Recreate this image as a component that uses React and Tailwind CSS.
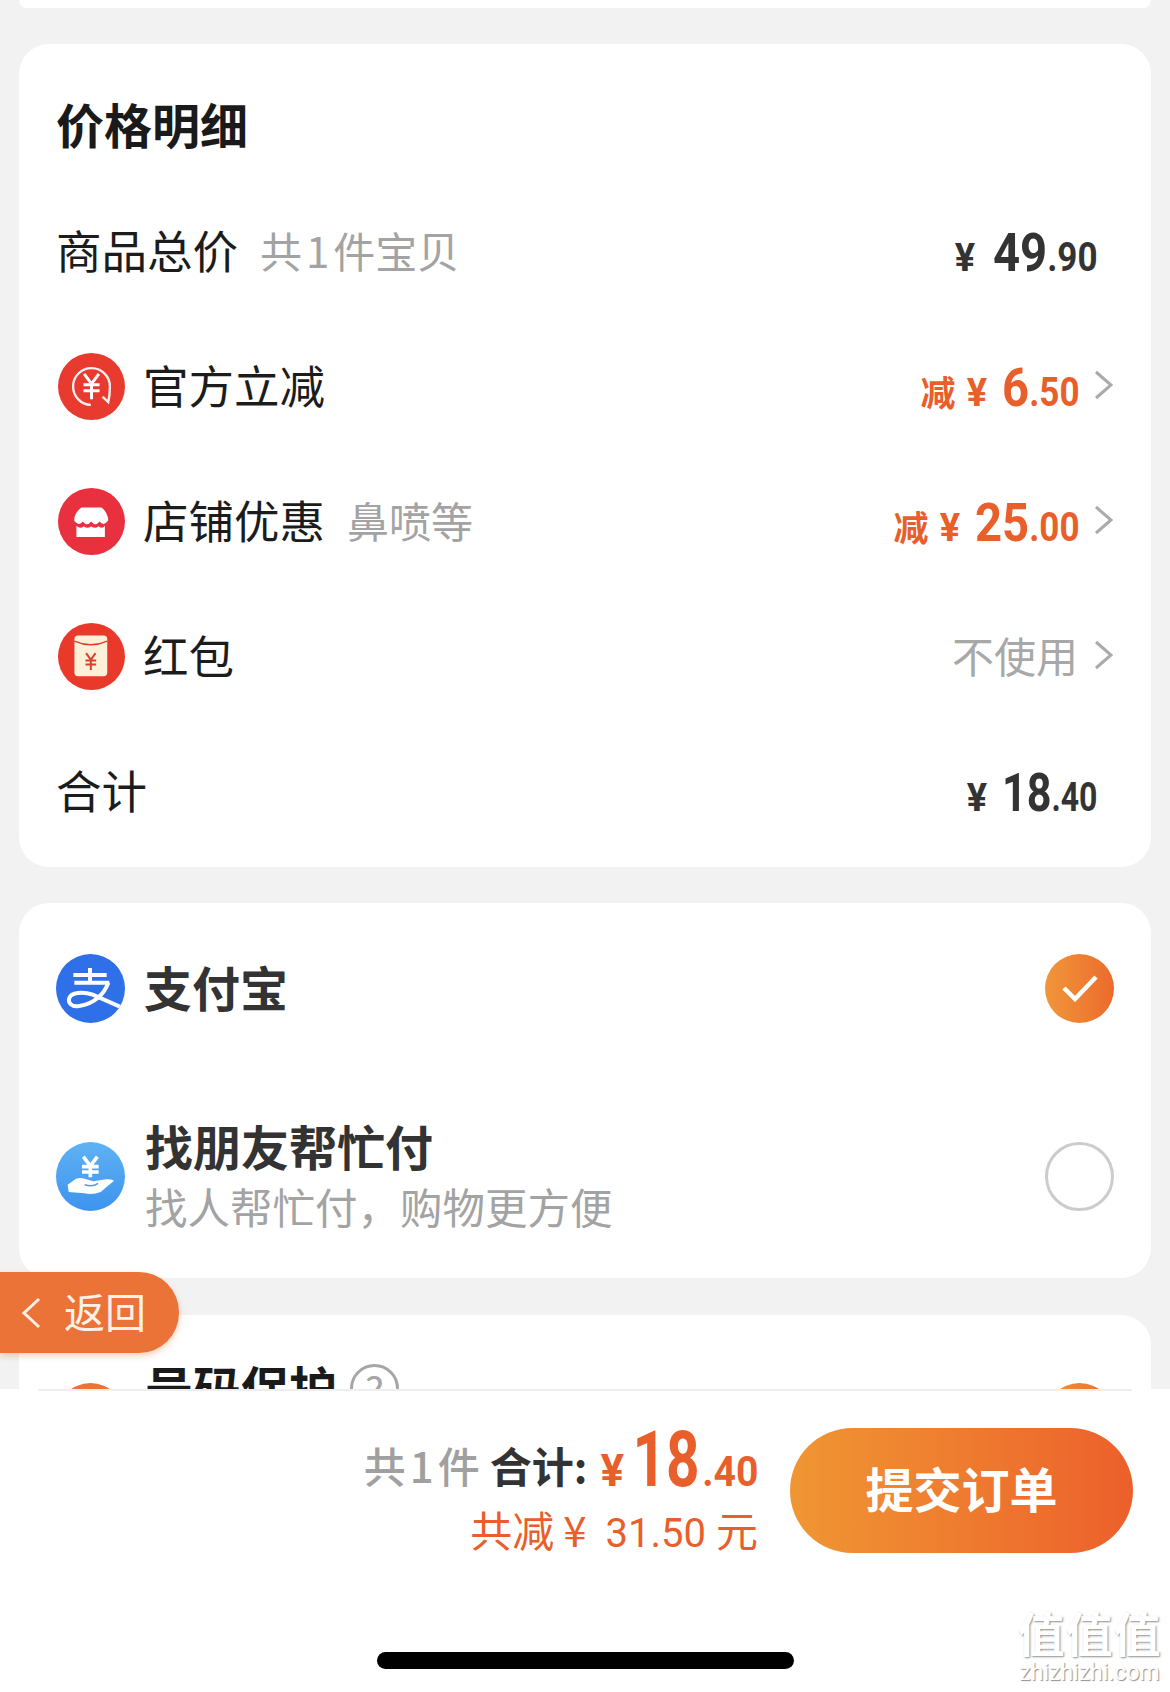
import React from "react";

const Chevron = () => (
  <svg width="19" height="30" viewBox="0 0 19 30" fill="none" className="shrink-0 mb-[4px]">
    <path d="M2 2 L17 15 L2 28" stroke="#aaaaaa" strokeWidth="3" />
  </svg>
);

const IconOfficial = () => (
  <svg width="67" height="67" viewBox="0 0 200 200" className="shrink-0">
    <circle cx="100" cy="100" r="100" fill="#e83a2e" />
    <path d="M98 155 A55 55 0 1 1 155 100 Q155 125 150 147 L133 130" fill="none" stroke="#fff" strokeWidth="7" strokeOpacity="0.92" />
    <path d="M78 62 L100 92 L122 62 M76 95 H124 M76 113 H124 M100 92 V138" fill="none" stroke="#fff" strokeWidth="9" />
  </svg>
);

const IconStore = () => (
  <svg width="67" height="67" viewBox="0 0 200 200" className="shrink-0">
    <circle cx="100" cy="100" r="100" fill="#e8303f" />
    <path d="M70 58 H130 Q148 72 150 96 Q137 116 124 100 Q111 116 99 100 Q86 116 74 100 Q62 116 48 96 Q50 72 70 58 Z" fill="#fff" />
    <path d="M55 113 Q66 124 77 114 Q88 124 99 114 Q110 124 121 114 Q132 124 140 113 V146 H55 Z" fill="#fff" />
  </svg>
);

const IconPacket = () => (
  <svg width="67" height="67" viewBox="0 0 200 200" className="shrink-0">
    <circle cx="100" cy="100" r="100" fill="#e8392b" />
    <rect x="49" y="37" width="98" height="122" rx="11" fill="#fdf0d8" />
    <path d="M49 54 Q98 76 147 54" fill="none" stroke="#e8392b" strokeWidth="4" />
    <path d="M84 90 L98 110 L112 90 M82 112 H114 M82 124 H114 M98 110 V140" fill="none" stroke="#d9402f" strokeWidth="6" />
  </svg>
);

const IconAlipay = () => (
  <svg width="69" height="69" viewBox="0 0 207 207" className="shrink-0">
    <defs>
      <clipPath id="ali"><circle cx="103.5" cy="103.5" r="103.5" /></clipPath>
    </defs>
    <circle cx="103.5" cy="103.5" r="103.5" fill="#2f6fe8" />
    <g clipPath="url(#ali)" fill="none" stroke="#fff" strokeWidth="12">
      <path d="M52 63 H152 M55 86 H160 M102 42 V86" />
      <path d="M157 86 C145 120 115 150 70 156 C45 160 35 145 40 132 C46 116 80 112 110 122 L215 168" />
    </g>
  </svg>
);

const IconFriend = () => (
  <svg width="69" height="69" viewBox="0 0 207 207" className="shrink-0">
    <defs>
      <linearGradient id="fr" x1="0" y1="0" x2="0" y2="1">
        <stop offset="0" stopColor="#5fb2f4" />
        <stop offset="1" stopColor="#3d93ee" />
      </linearGradient>
    </defs>
    <circle cx="103.5" cy="103.5" r="103.5" fill="url(#fr)" />
    <path d="M82 44 L103 72 L124 44 M78 74 H128 M78 90 H128 M103 72 V106" fill="none" stroke="#fff" strokeWidth="11" />
    <path d="M35 128 L60 110 Q72 106 86 110 L112 118 L150 112 Q168 110 174 116 L134 150 Q110 160 85 154 L38 150 Z" fill="#fff" />
    <path d="M86 128 Q110 136 126 124" fill="none" stroke="#4a9df0" strokeWidth="5" />
  </svg>
);

const Checked = () => (
  <div className="w-[69px] h-[69px] rounded-full shrink-0 flex items-center justify-center bg-gradient-to-r from-[#f0963a] to-[#ec6a2c]">
    <svg width="36" height="28" viewBox="0 0 36 28" fill="none">
      <path d="M2 14 L13 25 L34 3" stroke="#fff" strokeWidth="4.5" />
    </svg>
  </div>
);

const Digits = ({ big, small, width, scale = "scale-x-[0.875]" }) => (
  <span className={`inline-flex justify-end items-baseline ${width}`}>
    <span className={`shrink-0 whitespace-nowrap origin-right ${scale} font-['Roboto',sans-serif] leading-none font-bold`}>
      <span className="text-[54px]">{big}</span>
      <span className="text-[40px]">{small}</span>
    </span>
  </span>
);

const Row = ({ icon, label, note, children }) => (
  <div className="h-[135px] flex items-center">
    {icon ? <div className="ml-[2px] mr-[18px]">{icon}</div> : null}
    <span className="pb-[4px] text-[45.5px] leading-none text-[#1c1c1c]">{label}</span>
    {note ? <span className="ml-[22px] pb-[4px] text-[42px] leading-none text-[#a3a3a3]">{note}</span> : null}
    <div className="ml-auto flex items-center">{children}</div>
  </div>
);

const Amount = ({ prefix, big, small, width, scale, color, right, gap = "mr-[16px]" }) => (
  <div className={`flex items-baseline translate-y-[1px] ${color} ${right}`}>
    {prefix ? <span className="text-[35px] font-bold leading-none mr-[11px]">{prefix}</span> : null}
    <span className={`text-[38px] font-bold leading-none font-['Roboto',sans-serif] ${gap}`}>¥</span>
    <Digits big={big} small={small} width={width} scale={scale} />
  </div>
);

export default function App() {
  return (
    <div className="relative w-[1170px] h-[1692px] overflow-hidden bg-white font-['Noto_Sans_CJK_SC','Noto_Sans',sans-serif]">
      <div className="h-[1389px] overflow-hidden bg-[#f2f2f2]">
        <div className="mx-[19px] h-[8px] bg-white rounded-b-[30px]" />

        <section className="mx-[19px] mt-[36px] h-[823px] bg-white rounded-[30px] pl-[37px] pr-[38px]">
          <div className="h-[140px] pt-[55px]">
            <h2 className="text-[48px] leading-[48px] font-bold text-[#1a1a1a]">价格明细</h2>
          </div>
          <Row
            label="商品总价"
            note={<>共<span className="mx-[4px]">1</span>件宝贝</>}
          >
            <Amount big="49" small=".90" width="w-[106px]" color="text-[#333333]" right="mr-[16px]" />
          </Row>
          <Row icon={<IconOfficial />} label="官方立减">
            <Amount prefix="减" big="6" small=".50" width="w-[78px]" color="text-[#e85f2c]" gap="mr-[14px]" />
            <div className="ml-[15px]"><Chevron /></div>
          </Row>
          <Row icon={<IconStore />} label="店铺优惠" note="鼻喷等">
            <Amount prefix="减" big="25" small=".00" width="w-[105px]" color="text-[#e85f2c]" gap="mr-[14px]" />
            <div className="ml-[15px]"><Chevron /></div>
          </Row>
          <Row icon={<IconPacket />} label="红包">
            <span className="pb-[4px] text-[42px] leading-none text-[#a8a8a8]">不使用</span>
            <div className="ml-[16px]"><Chevron /></div>
          </Row>
          <Row label="合计">
            <Amount big="18" small=".40" width="w-[97px]" scale="scale-x-[0.8]" color="text-[#333333]" right="mr-[16px]" gap="mr-[13px]" />
          </Row>
        </section>

        <section className="mx-[19px] mt-[36px] h-[375px] bg-white rounded-[30px] pl-[37px] pr-[37px]">
          <div className="h-[172px] pb-[2px] flex items-center">
            <IconAlipay />
            <span className="ml-[19px] pb-[4px] text-[48px] leading-none font-bold text-[#333333]">支付宝</span>
            <div className="ml-auto"><Checked /></div>
          </div>
          <div className="h-[203px] flex items-center">
            <IconFriend />
            <div className="ml-[20px] pb-[3px]">
              <div className="text-[48px] leading-[48px] font-bold text-[#333333]">找朋友帮忙付</div>
              <div className="mt-[13px] text-[42.5px] leading-[48px] text-[#a3a3a3]">找人帮忙付，购物更方便</div>
            </div>
            <div className="ml-auto w-[69px] h-[69px] rounded-full border-[3px] border-[#cccccc]" />
          </div>
        </section>

        <section className="mx-[19px] mt-[37px] h-[200px] bg-white rounded-[30px] pl-[37px] pr-[37px] flex items-start">
          <div className="mt-[68px] w-[69px] h-[69px] rounded-full bg-[#ec7337] shrink-0" />
          <span className="ml-[20px] mt-[47px] text-[48px] leading-[48px] font-bold text-[#1a1a1a]">号码保护</span>
          <div className="ml-[13px] mt-[49px] w-[49px] h-[49px] rounded-full border-[3px] border-[#a6a6a6] flex items-center justify-center text-[40px] leading-none text-[#a6a6a6] shrink-0">?</div>
          <div className="ml-auto mt-[68px]"><Checked /></div>
        </section>
      </div>

      <div className="absolute left-0 top-[1272px] w-[179px] h-[81px] rounded-r-[40px] bg-[#ec7337] shadow-[0_3px_6px_rgba(236,115,55,0.35)] flex items-center">
        <svg width="20" height="32" viewBox="0 0 20 32" fill="none" className="ml-[21px]">
          <path d="M18 2 L3 16 L18 30" stroke="#fdf1ea" strokeWidth="3" />
        </svg>
        <span className="ml-[23px] pb-[4px] text-[41px] leading-none text-[#fdf1ea]">返回</span>
      </div>

      <div className="h-[303px] bg-white flex flex-col">
        <div className="mx-[38px] h-[2px] bg-[#eeeeee]" />
        <div className="mt-[37px] h-[125px] pr-[37px] flex justify-end">
          <div className="w-[420px] flex flex-col items-end">
            <div className="-mt-[7px] h-[61px] flex items-baseline justify-end whitespace-nowrap">
              <span className="-translate-y-[3px] text-[42px] leading-none font-medium text-[#a0a0a0]">共<span className="mx-[4px]">1</span>件</span>
              <span className="-translate-y-[3px] ml-[10px] text-[42px] leading-none font-bold text-[#333333]">合计:</span>
              <span className="ml-[13px] text-[44px] leading-none font-bold font-['Roboto',sans-serif] text-[#e85f2c]">¥</span>
              <span className="ml-[6px] w-[70px] inline-flex justify-end text-[#e85f2c]">
                <span className="shrink-0 origin-right scale-x-[0.75] font-['Roboto',sans-serif] text-[78px] leading-none font-bold">18</span>
              </span>
              <span className="w-[58px] inline-flex justify-end text-[#e85f2c]">
                <span className="shrink-0 origin-right scale-x-[0.93] font-['Roboto',sans-serif] text-[42px] leading-none font-bold">.40</span>
              </span>
            </div>
            <div className="mt-[23px] flex items-baseline text-[42px] leading-[48px] text-[#e85f2c] whitespace-nowrap">
              <span>共减</span>
              <span className="ml-[9px]">¥</span>
              <span className="ml-[19px] text-[40px] font-['Roboto',sans-serif]">31.50</span>
              <span className="ml-[10px]">元</span>
            </div>
          </div>
          <div className="ml-[32px] w-[343px] pb-[8px] rounded-full bg-gradient-to-r from-[#ef9633] to-[#ec5f2b] flex items-center justify-center text-[48px] leading-none font-bold text-white">
            提交订单
          </div>
        </div>
        <div className="mt-[99px] self-center ml-[1px] w-[417px] h-[17px] rounded-full bg-black" />
      </div>

      <div className="absolute left-[1017px] top-[1604px] w-[145px] text-center text-white">
        <div className="text-[47px] leading-[56px] font-bold tracking-[1px] [text-shadow:1px_1px_2px_#8f8f8f]">值值值</div>
        <div className="text-[23px] leading-[26px] font-['Roboto',sans-serif] [text-shadow:1px_1px_1px_#8f8f8f]">zhizhizhi.com</div>
      </div>
    </div>
  );
}
